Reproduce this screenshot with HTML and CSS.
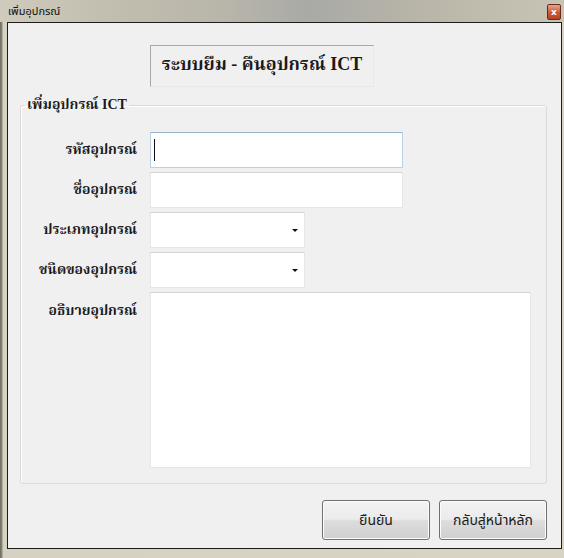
FILE: index.html
```html
<!DOCTYPE html>
<html lang="th">
<head>
<meta charset="utf-8">
<title>เพิ่มอุปกรณ์</title>
<link rel="stylesheet" href="styles.css">
</head>
<body>
<div class="window">
  <div class="titlebar">
    <span class="title">เพิ่มอุปกรณ์</span>
    <span class="close">x</span>
  </div>
  <div class="client">
    <div class="header">ระบบยืม - คืนอุปกรณ์ ICT</div>
    <fieldset class="group">
      <legend class="legend">เพิ่มอุปกรณ์ ICT</legend>
      <div class="form">
        <label class="lbl">รหัสอุปกรณ์</label>
        <div class="input input-wide focused"><span class="caret"></span></div>
        <label class="lbl">ชื่ออุปกรณ์</label>
        <div class="input input-wide"></div>
        <label class="lbl">ประเภทอุปกรณ์</label>
        <div class="input input-combo"><span class="arrow"></span></div>
        <label class="lbl">ชนิดของอุปกรณ์</label>
        <div class="input input-combo"><span class="arrow"></span></div>
        <label class="lbl lbl-top">อธิบายอุปกรณ์</label>
        <div class="input input-area"></div>
      </div>
    </fieldset>
    <div class="buttons">
      <button class="btn">ยืนยัน</button>
      <button class="btn">กลับสู่หน้าหลัก</button>
    </div>
  </div>
</div>
</body>
</html>
```
FILE: styles.css
```css
html, body {
  margin: 0;
  padding: 0;
  background: #d4d0c0;
}
.window {
  width: 564px;
  height: 558px;
  overflow: hidden;
  background: linear-gradient(90deg, #6d6a60 0px, #8a877c 2px, #d6d2c3 3px, #d8d4c5 100%);
}
.titlebar {
  height: 22px;
  display: flex;
  align-items: center;
  justify-content: space-between;
  padding: 0 3px 0 8px;
  background: linear-gradient(90deg, #cfcbbd 0%, #c2bdae 20%, #b8b5aa 40%, #a9aaa6 55%, #b9b5a8 75%, #c8c4b5 100%);
}
.title {
  font-family: "Noto Sans Thai", "Tahoma", "DejaVu Sans", sans-serif;
  font-size: 11px;
  color: #111;
  padding-top: 1px;
}
.close {
  width: 14px;
  height: 16px;
  margin-top: 2px;
  border-radius: 2px;
  border: 1px solid #6a2a1a;
  background: linear-gradient(#e9a58a, #c9583a 55%, #b84326);
  color: #fff;
  font-family: "DejaVu Sans", sans-serif;
  font-weight: bold;
  font-size: 9px;
  line-height: 15px;
  text-align: center;
  box-sizing: border-box;
}
.client {
  margin-left: 7px;
  width: 555px;
  height: 527px;
  box-sizing: border-box;
  border: 1px solid #1d1d1b;
  background: #f0f0f0;
  padding-top: 22px;
}
.header {
  margin-left: 142px;
  width: 224px;
  height: 42px;
  box-sizing: border-box;
  border: 1px solid #a8a8a8;
  border-right-color: #e8e8e8;
  border-bottom-color: #e8e8e8;
  display: flex;
  align-items: center;
  justify-content: center;
  white-space: nowrap;
  font-family: "Liberation Serif", "Noto Serif Thai", "Noto Sans Thai", serif;
  font-weight: bold;
  font-size: 18px;
  color: #1a1a1a;
  padding-bottom: 2px;
}
.group {
  margin: 10px 0 0 12px;
  width: 527px;
  height: 387px;
  box-sizing: border-box;
  border: 1px solid #dadada;
  border-radius: 3px;
  padding: 0;
  box-shadow: inset 1px 1px 0 #ffffff;
}
.legend {
  margin-left: 4px;
  padding: 0 2px;
  font-family: "Liberation Serif", "Noto Serif Thai", "Noto Sans Thai", serif;
  font-weight: bold;
  font-size: 14px;
  line-height: 16px;
  color: #1a1a1a;
}
.form {
  margin-top: 19px;
  display: grid;
  grid-template-columns: 116px auto;
  column-gap: 13px;
  row-gap: 4px;
  justify-items: start;
}
.lbl {
  justify-self: end;
  align-self: center;
  font-family: "Liberation Serif", "Noto Serif Thai", "Noto Sans Thai", serif;
  font-weight: bold;
  font-size: 14px;
  color: #1a1a1a;
}
.lbl-top {
  align-self: start;
  padding-top: 8px;
}
.input {
  position: relative;
  height: 36px;
  box-sizing: border-box;
  background: #ffffff;
  border: 1px solid #e6e6e6;
  border-top-color: #d2d2d2;
}
.input-wide { width: 253px; }
.input-combo { width: 155px; }
.input-area { width: 381px; height: 176px; }
.focused {
  border-color: #b9d0e6;
  border-top-color: #9ab3cc;
}
.caret {
  position: absolute;
  left: 3px;
  top: 6px;
  width: 1px;
  height: 22px;
  background: #111;
}
.arrow {
  position: absolute;
  right: 6px;
  top: 16px;
  width: 0;
  height: 0;
  border-left: 3px solid transparent;
  border-right: 3px solid transparent;
  border-top: 3px solid #111;
}
.buttons {
  display: flex;
  justify-content: flex-end;
  gap: 9px;
  margin-top: 16px;
  padding-right: 14px;
}
.btn {
  width: 108px;
  height: 40px;
  border: 1px solid #707070;
  border-radius: 3px;
  background: linear-gradient(#f3f3f3 0%, #ebebeb 48%, #dddddd 52%, #cfcfcf 100%);
  box-shadow: inset 0 0 0 1px #fcfcfc;
  font-family: "Noto Sans Thai", "Tahoma", "DejaVu Sans", sans-serif;
  font-size: 14px;
  color: #1a1a1a;
  padding: 0;
}
```
